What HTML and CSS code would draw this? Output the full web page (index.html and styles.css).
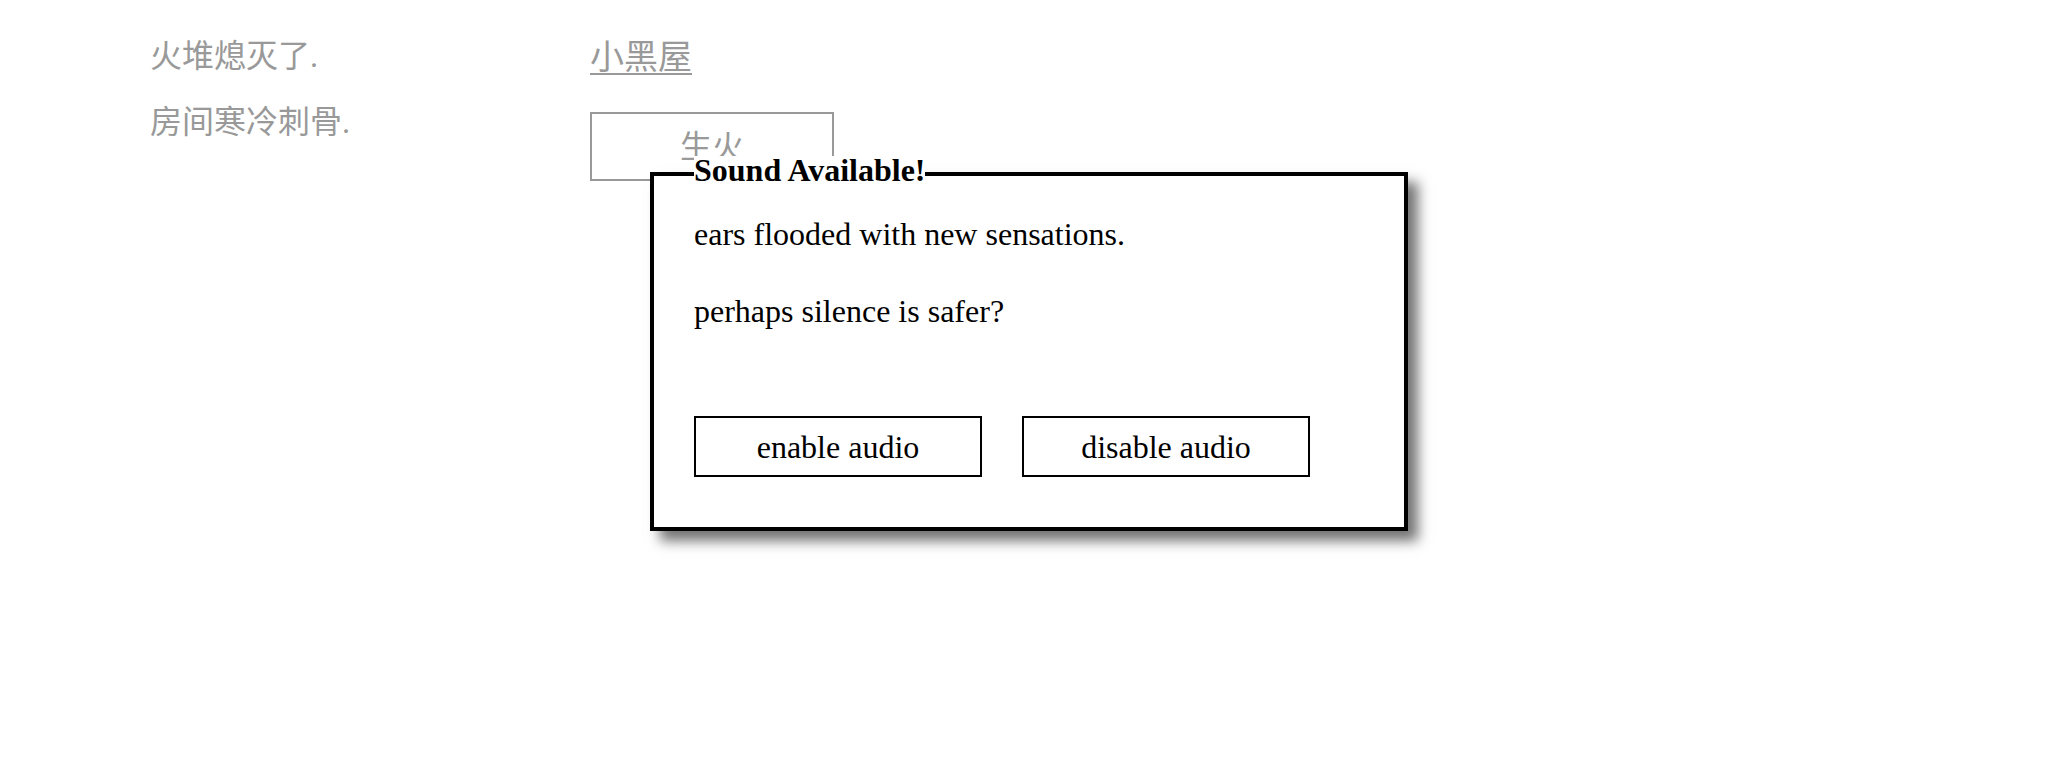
FILE: index.html
```
<!DOCTYPE html>
<html>
<head>
<meta charset="utf-8">
<title>A Dark Room</title>
<link rel="stylesheet" href="styles.css">
</head>
<body>
<div class="page">
  <div class="wrapper">
    <div class="notifications">
      <div class="note">火堆熄灭了.</div>
      <div class="note">房间寒冷刺骨.</div>
    </div>
    <div class="main">
      <div class="header"><span class="header-btn">小黑屋</span></div>
      <div class="btn">生火</div>
    </div>
  </div>
  <div class="event">
    <div class="event-title">Sound Available!</div>
    <div class="event-text">ears flooded with new sensations.</div>
    <div class="event-text">perhaps silence is safer?</div>
    <div class="event-buttons">
      <div class="ev-btn">enable audio</div>
      <div class="ev-btn">disable audio</div>
    </div>
  </div>
</div>
</body>
</html>
```
FILE: styles.css
```
html, body {
  margin: 0;
  padding: 0;
  background: #fff;
}
body {
  font-family: "Liberation Serif", "Noto Sans CJK SC", serif;
  font-size: 32px;
  color: #000;
}
.page {
  position: relative;
  width: 2052px;
  height: 772px;
  overflow: hidden;
}
.wrapper {
  display: flex;
  padding: 36px 0 0 150px;
}
.notifications {
  width: 440px;
  display: flex;
  flex-direction: column;
  gap: 26px;
  color: #999;
}
.note {
  line-height: 40px;
  height: 40px;
}
.main {
  display: flex;
  flex-direction: column;
  align-items: flex-start;
}
.header {
  margin-top: 2px;
  line-height: 40px;
  height: 40px;
  font-size: 34px;
}
.header-btn {
  color: #999;
  text-decoration: underline;
  text-underline-offset: 4px;
  text-decoration-thickness: 2px;
}
.btn {
  margin-top: 34px;
  box-sizing: border-box;
  width: 244px;
  height: 69px;
  padding-top: 1px;
  border: 2px solid #999;
  color: #999;
  display: flex;
  align-items: center;
  justify-content: center;
  line-height: 32px;
}
.event {
  position: absolute;
  left: 650px;
  top: 172px;
  box-sizing: border-box;
  width: 758px;
  border: 4px solid #000;
  background: #fff;
  padding: 42px 40px 50px 40px;
  box-shadow: 10px 10px 12px rgba(0, 0, 0, 0.55);
}
.event-title {
  position: absolute;
  top: -20px;
  left: 40px;
  font-weight: bold;
  line-height: 28px;
  background: #fff;
}
.event-text {
  line-height: 32px;
  height: 32px;
  margin-bottom: 45px;
}
.event-text + .event-text {
  margin-bottom: 89px;
}
.event-buttons {
  display: flex;
  gap: 40px;
}
.ev-btn {
  box-sizing: border-box;
  width: 288px;
  height: 61px;
  border: 2px solid #000;
  display: flex;
  align-items: center;
  justify-content: center;
  line-height: 32px;
}
```
